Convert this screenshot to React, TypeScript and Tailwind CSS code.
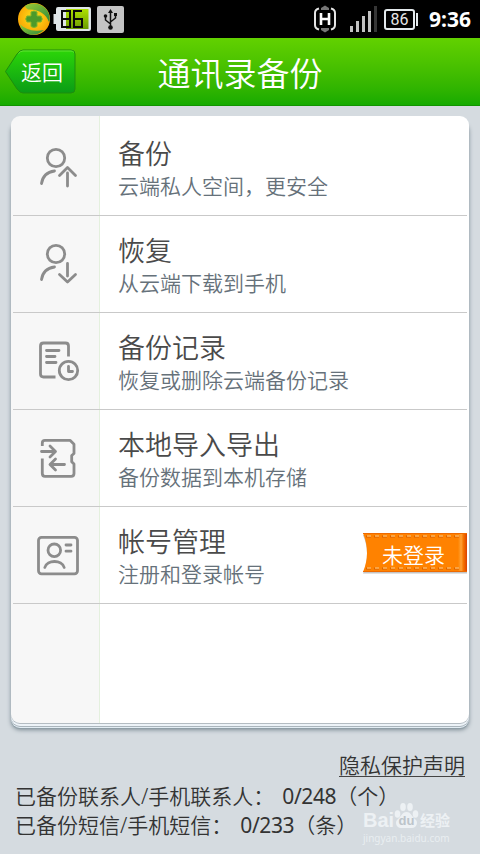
import React from "react";

const BackupIcon = () => (
  <>
    <circle cx="45" cy="39" r="8.7" />
    <path d="M30.5 64.5C31.5 57.5 36 53 43.5 52" />
    <path d="M48.5 56.5L56.5 48.5L64.5 56.5M56.5 54V67" />
  </>
);

const RestoreIcon = () => (
  <>
    <circle cx="45" cy="38" r="8.7" />
    <path d="M30.5 63.5C31.5 56.5 36 52 43.5 51" />
    <path d="M48.5 58.5L56.5 66L64.5 58.5M56.5 47.5V60" />
  </>
);

const RecordIcon = () => (
  <>
    <path d="M57.5 43.5V33Q57.5 30 54.5 30H32.5Q29.5 30 29.5 33V61Q29.5 64 32.5 64H44.5" strokeLinecap="butt" />
    <path d="M35.5 37.5H48M35.5 43.5H44M35.5 49.5H45" />
    <circle cx="57.5" cy="57.5" r="9.2" />
    <path d="M57.5 53.5V58.5H61.5" />
  </>
);

const TransferIcon = () => (
  <>
    <path
      d="M31.3 36V33Q31.3 30.3 34 30.3H59L63 34.3V43.5L60.7 45.5V51.7L63 54V63.5Q63 66.3 60.2 66.3H34Q31.3 66.3 31.3 63.5V48.5"
      strokeLinecap="butt"
    />
    <path d="M30.5 41.5H44M39 36L44.5 41.5L39 47" />
    <path d="M53.5 54.5H40M44.5 49L39 54.5L44.5 60" />
  </>
);

const AccountIcon = () => (
  <>
    <rect x="27.5" y="30.3" width="39" height="36.5" rx="3" />
    <circle cx="43.3" cy="43.3" r="6.3" />
    <path d="M33.8 60.5C36 52.5 51 52.5 53.2 60.5M55 38H60M55 44.2H60" />
  </>
);

interface MenuItem {
  title: string;
  desc: string;
  Icon: () => React.ReactElement;
  ribbon?: string;
}

const menuItems: MenuItem[] = [
  { title: "备份", desc: "云端私人空间，更安全", Icon: BackupIcon },
  { title: "恢复", desc: "从云端下载到手机", Icon: RestoreIcon },
  { title: "备份记录", desc: "恢复或删除云端备份记录", Icon: RecordIcon },
  { title: "本地导入导出", desc: "备份数据到本机存储", Icon: TransferIcon },
  { title: "帐号管理", desc: "注册和登录帐号", Icon: AccountIcon, ribbon: "未登录" },
];

const StatusBar = () => (
  <div className="flex h-[38px] shrink-0 items-center bg-black pl-[17px] pr-[9px]">
    <svg width="34" height="34" viewBox="0 0 34 34">
      <defs>
        <radialGradient id="ball" cx="0.5" cy="0.45" r="0.6">
          <stop offset="0" stopColor="#ffe21c" />
          <stop offset="1" stopColor="#f79c00" />
        </radialGradient>
        <linearGradient id="leaf" x1="0" y1="0" x2="1" y2="1">
          <stop offset="0" stopColor="#9ccb35" />
          <stop offset="1" stopColor="#2c8a3c" />
        </linearGradient>
      </defs>
      <circle cx="17" cy="17" r="16" fill="url(#ball)" />
      <path d="M8 4C16-1 27 2 31 10C33 14 33 18 32 20C29 12 22 7 11 7.5C9 6 8 5 8 4Z" fill="url(#leaf)" />
      <path d="M3 22C8 27 15 30 27 28C20 35 9 34 4.5 27Z" fill="url(#leaf)" />
      <path d="M14 10Q17 8 20 10V14H24Q26.5 17 24 20H20V24.5Q17 26.5 14 24.5V20H10Q7.5 17 10 14H14Z" fill="#4d9a2a" stroke="#80b52a" />
    </svg>
    <svg className="ml-[2px]" width="38" height="26" viewBox="0 0 38 26">
      <defs>
        <linearGradient id="charge" x1="0" y1="0" x2="0" y2="1">
          <stop offset="0" stopColor="#aee000" />
          <stop offset="1" stopColor="#6b9c00" />
        </linearGradient>
      </defs>
      <path d="M3 3Q3 1 5 1H36Q38 1 38 3V23Q38 25 36 25H5Q3 25 3 23V18H0.5V8H3Z" fill="#dfe5e8" />
      <rect x="13" y="3" width="22.5" height="20" fill="url(#charge)" />
      <path d="M9 5H17V21H9ZM9 13H17M29 5H21V21H29V13H21" fill="none" stroke="#080808" strokeWidth="2" />
    </svg>
    <div className="ml-[6px] flex h-[27px] w-[27px] items-center justify-center rounded-[2px] bg-[#c4c4c4]">
      <svg width="17" height="23" viewBox="0 0 17 23" fill="none" stroke="#111" strokeWidth="1.5">
        <path d="M8.5 19V4M8.5 16L3.5 12V8M8.5 14L13.5 10V7" />
        <path d="M6 5L8.5 1L11 5Z" fill="#111" stroke="none" />
        <circle cx="8.5" cy="19.5" r="2.3" fill="#111" stroke="none" />
        <circle cx="3.5" cy="8" r="1.8" fill="#111" stroke="none" />
        <path d="M12 5H15V8H12Z" fill="#111" stroke="none" />
      </svg>
    </div>
    <svg className="ml-auto" width="22" height="28" viewBox="0 0 22 28" fill="none">
      <path d="M5 3.5Q1 4.5 1 8V20Q1 23.5 5 24.5M17 3.5Q21 4.5 21 8V20Q21 23.5 17 24.5" stroke="#e4e4e4" strokeWidth="2" />
      <path d="M7 8V20M15 8V20M7 14H15" stroke="#fff" strokeWidth="2.6" />
      <path d="M7 5V3L11 0.5L15 3V5ZM7 23V25L11 27.5L15 25V23Z" fill="#777" />
    </svg>
    <svg className="ml-[14px]" width="27" height="26" viewBox="0 0 27 26">
      <path d="M0 20H3V26H0ZM6 15H9V26H6ZM12 10H15V26H12ZM18 5H21V26H18Z" fill="#c2c2c2" />
      <path d="M24 0H27V26H24Z" fill="#363636" />
    </svg>
    <div className="ml-[7px] flex h-[21px] w-[31px] items-center justify-center rounded-[3px] border-2 border-[#e3e9ec] font-['Roboto',sans-serif] text-[16px] font-normal leading-none text-[#e6e6e6]">
      <span className="pt-[2px]">86</span>
    </div>
    <div className="ml-[1px] h-[13px] w-[2px] bg-[#e3e9ec]" />
    <div className="ml-[11px] w-[42px] whitespace-nowrap font-['Noto_Sans',sans-serif] text-[21px] font-bold leading-none text-white">9:36</div>
  </div>
);

const Header = () => (
  <div className="grid h-[68px] shrink-0 grid-cols-[80px_1fr_80px] items-center border-b border-[#129400] bg-linear-to-b from-[#62d100] to-[#15ab00] text-white">
    <button className="relative mr-[4px] h-[45px] w-[71px] justify-self-end pl-[3px] pt-[2px] text-[21px] leading-none">
      <svg className="absolute inset-0" width="71" height="45" viewBox="0 0 71 45">
        <defs>
          <linearGradient id="back" x1="0" y1="0" x2="0" y2="1">
            <stop offset="0" stopColor="#2cd608" />
            <stop offset="1" stopColor="#0a9c16" />
          </linearGradient>
        </defs>
        <path d="M0.5 22.5L12 5Q15 1 18 1H66Q70 1 70 5V40Q70 44 66 44H18Q15 44 12 40Z" fill="url(#back)" stroke="#1f8d0c" />
        <path d="M13.5 4.5Q15.5 2 18 2H66Q68 2 69 3.5" fill="none" stroke="#62e334" />
      </svg>
      <span className="relative">返回</span>
    </button>
    <h1 className="pt-[3px] text-center text-[33px] leading-none">通讯录备份</h1>
  </div>
);

const Ribbon = ({ label }: { label: string }) => (
  <div className="relative ml-auto flex h-[42px] w-[104px] items-center justify-center">
    <svg className="absolute inset-0" width="104" height="42" viewBox="0 0 104 42">
      <defs>
        <linearGradient id="fold" x1="0" y1="0" x2="1" y2="0">
          <stop offset="0" stopColor="#ff8400" />
          <stop offset="0.35" stopColor="#ffa035" />
          <stop offset="0.6" stopColor="#f57400" />
          <stop offset="1" stopColor="#dc4200" />
        </linearGradient>
      </defs>
      <path d="M0 2H104V40.5H0Q8 21 0 2Z" fill="#c4c4c4" />
      <path d="M0 0H104V39H0Q8 20 0 0Z" fill="#ff8200" />
      <path d="M95 0H104V39H95Z" fill="url(#fold)" />
      <path d="M0 0.5H104M0 38.5H104" stroke="#ee6a00" />
      <path d="M3 3.5H96M3 35.5H96" stroke="#d96100" strokeWidth="2" strokeDasharray="5 3" />
      <path d="M4 3H96M4 35H96" stroke="#ffb65c" strokeWidth="1.5" strokeDasharray="4 4" />
    </svg>
    <span className="relative pr-[3px] pt-[2px] text-[21px] leading-none text-white">{label}</span>
  </div>
);

const MenuRow = ({ title, desc, Icon, ribbon }: MenuItem) => (
  <div className="mx-[2px] flex h-[97px] border-b border-[#c9c9c9]">
    <svg
      className="-ml-[2px] shrink-0"
      width="89"
      height="96"
      viewBox="0 0 89 96"
      fill="none"
      stroke="#8c8c8c"
      strokeWidth="2.8"
      strokeLinecap="round"
      strokeLinejoin="round"
    >
      <Icon />
    </svg>
    <div className="flex flex-col pl-[18px] pt-[19px]">
      <div className="whitespace-nowrap text-[27px] leading-[32px] text-[#4a4a4a]">{title}</div>
      <div className="mt-[2px] whitespace-nowrap text-[21px] leading-[28px] text-[#66717a]">{desc}</div>
    </div>
    {ribbon && (
      <div className="ml-auto pt-[26px]">
        <Ribbon label={ribbon} />
      </div>
    )}
  </div>
);

const Watermark = () => (
  <div className="absolute left-[363px] top-[801px] flex w-[90px] flex-col font-['Liberation_Sans','Noto_Sans_CJK_SC',sans-serif] text-[#edf1f4]">
    <div className="flex h-[28px] items-end whitespace-nowrap">
      <span className="h-[17px] w-[31px] text-[20px] font-bold leading-[17px]">Bai</span>
      <span className="relative flex h-[27px] w-[25px] items-end justify-center">
        <svg className="absolute inset-0" width="25" height="27" viewBox="0 0 25 27" fill="currentColor">
          <ellipse cx="3.5" cy="12" rx="2.8" ry="3.8" />
          <ellipse cx="9" cy="5" rx="2.8" ry="4" />
          <ellipse cx="16" cy="5" rx="2.8" ry="4" />
          <ellipse cx="21.5" cy="12" rx="2.8" ry="3.8" />
          <path d="M12.5 10C17 10 18 15 22 18C24 20 23 26 18 26H7C2 26 1 20 3 18C7 15 8 10 12.5 10Z" />
        </svg>
        <span className="relative mb-[2px] text-[13px] font-bold leading-none text-[#bcc4ca]">du</span>
      </span>
      <span className="ml-[1px] text-[15px] font-bold leading-[16px]">经验</span>
    </div>
    <div className="mt-[3px] whitespace-nowrap font-['Noto_Sans',sans-serif] text-[10px] font-normal leading-[12px] text-[#e9eef1]">jingyan.baidu.com</div>
  </div>
);

export default function App() {
  return (
    <div className="relative flex h-[854px] w-[480px] flex-col overflow-hidden bg-[#d5dbe0] font-['Noto_Sans','Noto_Sans_CJK_SC',sans-serif] font-[350]">
      <StatusBar />
      <Header />
      <div className="mx-[11px] mt-[10px] h-[607px] shrink-0 rounded-[9px] bg-[linear-gradient(to_right,#f7f7f7_88px,#e4f0de_88px,#e4f0de_89px,#ffffff_89px)] pt-[3px] shadow-[0_1px_0_#b4bcc2,0_3px_0_#edf3f8,0_4px_0_#aab5bc,0_5px_0_#e3edf4,0_6px_0_#8f9ea6,0_7px_4px_#7c8b94]">
        {menuItems.map((item) => (
          <MenuRow key={item.title} {...item} />
        ))}
      </div>
      <div className="mt-[29px] flex flex-col px-[15px] text-[21px] text-[#333333]">
        <a className="h-[25px] self-end border-b border-[#444444] leading-[26px]">隐私保护声明</a>
        <div className="mt-[5px] whitespace-pre leading-[29px]">
          已备份联系人/手机联系人：<span className="ml-[8px] font-normal tracking-[-0.4px]">0/248</span>（个）
        </div>
        <div className="whitespace-pre leading-[29px]">
          已备份短信/手机短信：<span className="ml-[8px] font-normal tracking-[-0.4px]">0/233</span>（条）
        </div>
      </div>
      <Watermark />
    </div>
  );
}
